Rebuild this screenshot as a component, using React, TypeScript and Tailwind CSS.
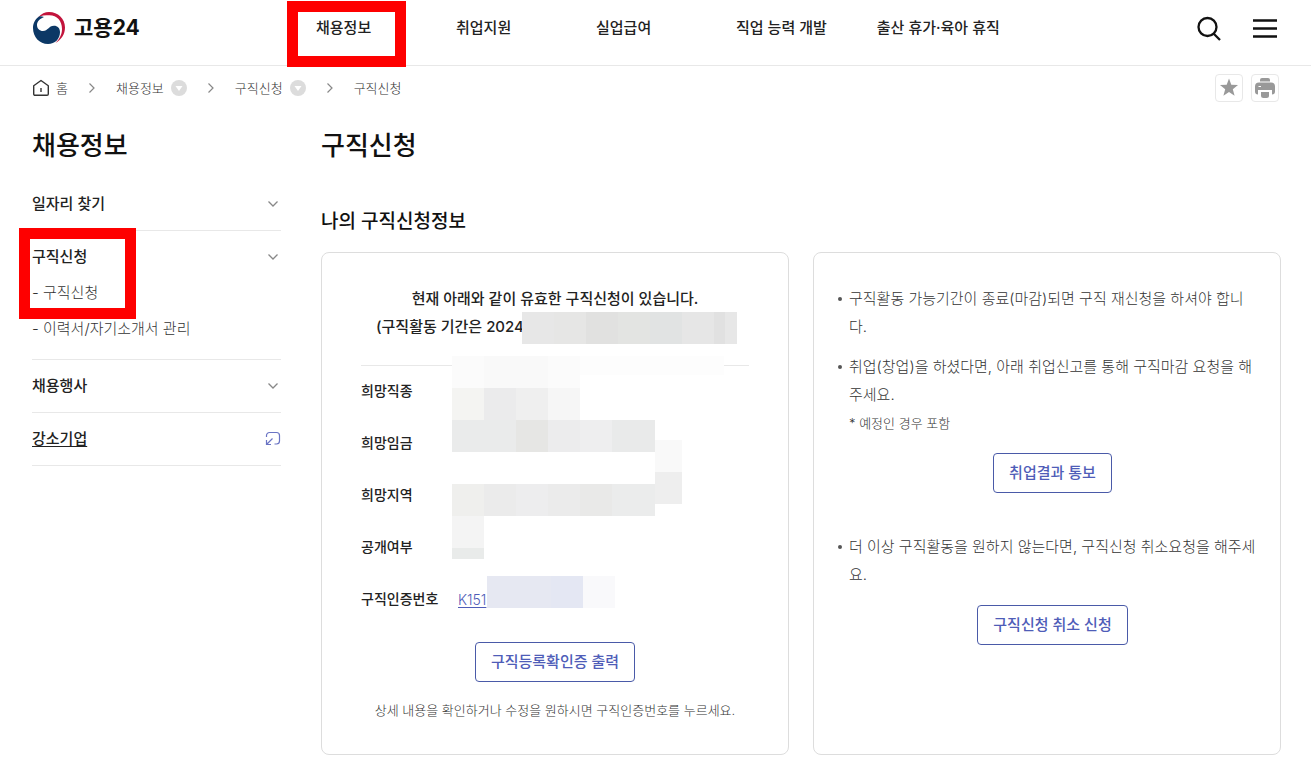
import { ReactNode } from "react";

const navItems = ["채용정보", "취업지원", "실업급여", "직업 능력 개발", "출산 휴가·육아 휴직"];

// x, y, width, height, fill
const mosaic: [number, number, number, number, string][] = [
  [0, 44, 272, 19, "#fdfdfd"],
  [70, 0, 32, 32, "#e7e7e7"],
  [102, 0, 32, 32, "#e6e6e5"],
  [134, 0, 32, 32, "#e1e1e0"],
  [166, 0, 32, 32, "#e3e4e2"],
  [198, 0, 32, 32, "#e1e3e3"],
  [230, 0, 32, 32, "#e6e6e6"],
  [262, 0, 11, 32, "#e1e1e1"],
  [273, 0, 12, 32, "#e7e7e7"],
  [0, 44, 32, 32, "#fbfbfb"],
  [32, 44, 64, 32, "#f9f9f9"],
  [96, 44, 32, 32, "#fbfbfb"],
  [0, 76, 32, 32, "#f4f4f2"],
  [32, 76, 32, 32, "#ebebec"],
  [64, 76, 32, 32, "#efefef"],
  [96, 76, 32, 32, "#f6f6f6"],
  [0, 108, 64, 32, "#eaebeb"],
  [64, 108, 32, 32, "#e6e6e4"],
  [96, 108, 32, 32, "#ececed"],
  [128, 108, 32, 32, "#eeeeef"],
  [160, 108, 43, 32, "#e9eaea"],
  [203, 128, 27, 32, "#f9f9f9"],
  [203, 160, 27, 32, "#eeeeee"],
  [0, 172, 32, 32, "#efefed"],
  [32, 172, 32, 32, "#ebebeb"],
  [64, 172, 32, 32, "#ededee"],
  [96, 172, 32, 32, "#ebebeb"],
  [128, 172, 32, 32, "#e9e9e8"],
  [160, 172, 43, 32, "#ebecec"],
  [0, 204, 32, 32, "#f4f4f4"],
  [0, 236, 32, 11, "#e9ebea"],
  [35, 264, 64, 32, "#e6e8f2"],
  [99, 264, 32, 32, "#e4e7f3"],
  [131, 264, 32, 32, "#f9f9fb"],
];

export default function App() {
  return (
    <div className="bg-white pb-[22px] font-['Inter','Noto_Sans_CJK_KR',sans-serif] text-[15px] text-[#222]">
      <Header />
      <div className="pr-[30px] pl-8">
        <Breadcrumb />
        <div className="flex gap-10">
          <Sidebar />
          <main className="min-w-0 flex-1">
            <h1 className="mt-[17px] text-[26px] leading-[38px] font-medium text-[#111]">구직신청</h1>
            <h2 className="mt-[43px] text-[19px] leading-7 font-medium text-[#111]">나의 구직신청정보</h2>
            <div className="mt-4 grid grid-cols-2 gap-6">
              <StatusCard />
              <GuideCard />
            </div>
          </main>
        </div>
      </div>
    </div>
  );
}

function Header() {
  return (
    <header className="flex h-[66px] items-center border-b border-[#e8e8e8] pr-[33px] pl-8">
      <a href="#" className="flex w-[284px] shrink-0 items-center gap-2 pb-[10px]">
        <Logo />
        <span className="text-[21px] leading-8 font-bold text-[#111]">고용24</span>
      </a>
      <nav className="flex flex-1 gap-[50px] pb-[10px] leading-6 font-medium">
        {navItems.map((item, i) => (
          <a key={item} href="#" className="relative min-w-[90px] whitespace-nowrap">
            {item}
            {i === 0 && (
              <span className="pointer-events-none absolute -top-[15px] -left-[29px] h-[66px] w-[119px] border-11 border-[#fe0000]" />
            )}
          </a>
        ))}
      </nav>
      <div className="flex shrink-0 items-center gap-[30px] pb-2">
        <button aria-label="검색">
          <svg width="26" height="26" viewBox="0 0 26 26" fill="none" stroke="#111" strokeWidth="2.3">
            <circle cx="11.5" cy="11" r="9" />
            <path d="M17.500 17.500l6.500 6.500" />
          </svg>
        </button>
        <button aria-label="전체메뉴">
          <svg width="26" height="26" viewBox="0 0 26 26" fill="none" stroke="#111" strokeWidth="2.3">
            <path d="M1 4.500h24M1 12.500h24M1 20.500h24" />
          </svg>
        </button>
      </div>
    </header>
  );
}

function Logo() {
  return (
    <svg width="34" height="34" viewBox="0 0 34 34">
      <path
        d="M6 6.500C9.500 2.500 13 1 17 1c9 0 16 6.500 16 15.500 0 7-4 12.500-9.500 15.500C27.500 28 30 23.500 30 18 30 10 25 4.300 17.500 4.300 13 4.300 9 4.500 6 6.500z"
        fill="#c2143c"
      />
      <path
        d="M7 5.500C2.500 8.500 1 13 1 17c0 9 6.500 16 15 16 7 0 12-5 12-12 0-4-2.500-6.300-6-6.300-5.500 0-6 5.300-11 5.300-3.500 0-6-2.500-6-6 0-3.500 3-6.500 7-8-2-.8-3.500-1-5-.5z"
        fill="#0c3866"
      />
    </svg>
  );
}

function Breadcrumb() {
  return (
    <div className="flex h-11 items-center justify-between">
      <nav aria-label="breadcrumb" className="flex items-center text-[13px] leading-5 font-light text-[#333]">
        <a href="#" className="flex items-center gap-[6px]">
          <svg width="18" height="18" viewBox="0 0 18 18" fill="none" stroke="#333" strokeWidth="1.4">
            <path d="M1.7 6.7L9 1.5l7.3 5.2V15a1.3 1.3 0 0 1-1.3 1.3H3A1.3 1.3 0 0 1 1.7 15z" strokeLinejoin="round" />
            <path d="M9 9v4" />
          </svg>
          홈
        </a>
        <Separator />
        <a href="#">채용정보</a>
        <MoreButton />
        <Separator />
        <a href="#">구직신청</a>
        <MoreButton />
        <Separator />
        <span>구직신청</span>
      </nav>
      <div className="flex gap-2 pr-[2px]">
        <button aria-label="즐겨찾기" className="flex size-7 items-center justify-center rounded-sm border border-[#e8e8e8]">
          <svg width="20" height="20" viewBox="0 0 20 20" fill="#999">
            <path d="M10 .5l2.300 6.300 6.700.3-5.200 4.200 1.800 6.500-5.600-3.700-5.600 3.700 1.800-6.500L1 7.100l6.700-.3z" />
          </svg>
        </button>
        <button aria-label="인쇄" className="flex size-7 items-center justify-center rounded-sm border border-[#e8e8e8]">
          <svg width="20" height="20" viewBox="0 0 20 20" fill="#999">
            <path d="M5 3.500V2a2 2 0 0 1 2-2h6a2 2 0 0 1 2 2v1.500z" />
            <path d="M4 4.500h12a4 4 0 0 1 4 4v5a3 3 0 0 1-3 3v-4.500H3v4.500a3 3 0 0 1-3-3v-5a4 4 0 0 1 4-4z" />
            <path d="M6 14h8v3.500a2.500 2.500 0 0 1-2.500 2.500h-3A2.500 2.500 0 0 1 6 17.500z" />
            <path d="M3.500 8.500h2.500" stroke="#fff" />
          </svg>
        </button>
      </div>
    </div>
  );
}

function Separator() {
  return (
    <svg className="mx-5" width="8" height="12" viewBox="0 0 8 12" fill="none" stroke="#888" strokeWidth="1.2">
      <path d="M1.500 1.500L6 6l-4.500 4.500" />
    </svg>
  );
}

function MoreButton() {
  return (
    <button aria-label="하위 메뉴" className="ml-[7px]">
      <svg width="16" height="16" viewBox="0 0 16 16">
        <circle cx="8" cy="8" r="8" fill="#dcdcdc" />
        <path d="M4.500 6h7L8 11z" fill="#fff" />
      </svg>
    </button>
  );
}

function Chevron() {
  return (
    <svg className="mr-[2px]" width="12" height="8" viewBox="0 0 12 8" fill="none" stroke="#888" strokeWidth="1.3">
      <path d="M1.500 1.500L6 6l4.500-4.500" />
    </svg>
  );
}

function Sidebar() {
  return (
    <aside className="w-[249px] shrink-0">
      <h2 className="mt-[17px] text-[26px] leading-[38px] font-medium text-[#111]">채용정보</h2>
      <ul className="mt-[13px]">
        <MenuItem title="일자리 찾기" />
        <MenuItem title="구직신청">
          <ul className="space-y-[18px] pt-px pb-[21px] leading-[18px] font-light text-[#333]">
            <li>
              <a href="#">- 구직신청</a>
            </li>
            <li>
              <a href="#">- 이력서/자기소개서 관리</a>
            </li>
          </ul>
          <span className="pointer-events-none absolute -top-[3px] -left-[13px] h-[91px] w-[117px] border-11 border-[#fe0000]" />
        </MenuItem>
        <MenuItem title="채용행사" />
        <li className="border-b border-[#e8e8e8]">
          <a href="#" className="flex h-[52px] items-center justify-between font-medium underline underline-offset-2">
            강소기업
            <svg width="16" height="16" viewBox="0 0 16 16" fill="none" stroke="#6a74c4" strokeWidth="1.200">
              <path d="M1.500 6V4.500a3 3 0 0 1 3-3h7a3 3 0 0 1 3 3v5.500a3 3 0 0 1-3 3H9.500" />
              <path d="M7.500 7.500l-5.500 5.500M1.500 9v4.500h4.500" />
            </svg>
          </a>
        </li>
      </ul>
    </aside>
  );
}

function MenuItem({ title, children }: { title: string; children?: ReactNode }) {
  return (
    <li className="relative border-b border-[#e8e8e8]">
      <button className="flex h-[52px] w-full items-center justify-between font-medium">
        {title}
        <Chevron />
      </button>
      {children}
    </li>
  );
}

function OutlineButton({ children }: { children: ReactNode }) {
  return (
    <button className="h-10 rounded-[4px] border border-[#4a5aa8] px-[15px] font-medium text-[#4f5db8]">
      {children}
    </button>
  );
}

function Row({ label, children }: { label: string; children?: ReactNode }) {
  return (
    <div className="flex h-[52px] items-center">
      <dt className="w-[97px] shrink-0 pb-[3px] text-[14px] font-medium">{label}</dt>
      <dd>{children}</dd>
    </div>
  );
}

function StatusCard() {
  return (
    <section className="relative rounded-lg border border-[#ddd] px-[39px] pt-8 pb-[34px]">
      <div className="leading-7 font-medium">
        <p className="text-center">현재 아래와 같이 유효한 구직신청이 있습니다.</p>
        <p className="pl-[15px]">(구직활동 기간은 2024</p>
      </div>
      <dl className="mt-6 border-t border-[#e8e8e8]">
        <Row label="희망직종" />
        <Row label="희망임금" />
        <Row label="희망지역" />
        <Row label="공개여부" />
        <Row label="구직인증번호">
          <a href="#" className="text-[14px] font-light text-[#4f5db8] underline underline-offset-2">
            K151
          </a>
        </Row>
      </dl>
      <div className="mt-4 text-center">
        <OutlineButton>구직등록확인증 출력</OutlineButton>
        <p className="mt-[18px] text-[13px] leading-5 font-light text-[#333]">
          상세 내용을 확인하거나 수정을 원하시면 구직인증번호를 누르세요.
        </p>
      </div>
      <svg
        className="pointer-events-none absolute top-[59px] left-[130px]"
        width="285"
        height="296"
        viewBox="0 0 285 296"
        shapeRendering="crispEdges"
      >
        {mosaic.map(([x, y, w, h, fill], i) => (
          <rect key={i} x={x} y={y} width={w} height={h} fill={fill} />
        ))}
      </svg>
    </section>
  );
}

function GuideItem({ children }: { children: ReactNode }) {
  return (
    <li className="flex">
      <span className="mt-3 mr-[7px] size-1 shrink-0 rounded-full bg-[#555]" />
      <div className="min-w-0 flex-1">{children}</div>
    </li>
  );
}

function GuideCard() {
  return (
    <section className="rounded-lg border border-[#ddd] pt-8 pr-6 pb-8 pl-6">
      <ul className="space-y-3 leading-7 font-light text-[#333]">
        <GuideItem>구직활동 가능기간이 종료(마감)되면 구직 재신청을 하셔야 합니다.</GuideItem>
        <GuideItem>
          <p>취업(창업)을 하셨다면, 아래 취업신고를 통해 구직마감 요청을 해주세요.</p>
          <p className="text-[13px]">* 예정인 경우 포함</p>
          <div className="mt-4 mb-7 text-center">
            <OutlineButton>취업결과 통보</OutlineButton>
          </div>
        </GuideItem>
        <GuideItem>
          <p>더 이상 구직활동을 원하지 않는다면, 구직신청 취소요청을 해주세요.</p>
          <div className="mt-4 text-center">
            <OutlineButton>구직신청 취소 신청</OutlineButton>
          </div>
        </GuideItem>
      </ul>
    </section>
  );
}
